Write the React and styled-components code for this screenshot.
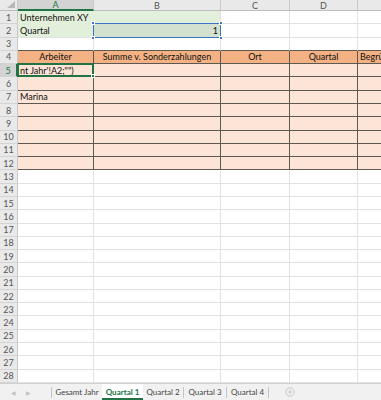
import styled, { createGlobalStyle } from "styled-components";

const GlobalStyle = createGlobalStyle`
  html, body { margin: 0; padding: 0; background: #ffffff; }
  body { font-family: Lato, "Open Sans", sans-serif; }
  * { box-sizing: border-box; }
`

const GREEN = "#e2efda"
const GREEN_SEL = "#d3e1d0"
const ORANGE = "#f4b183"
const PEACH = "#fce4d6"
const GRID = "#e2e2e2"
const DARK = "#5e5853"
const EXCEL_GREEN = "#217346"

const Window = styled.div`
  width: 381px;
  height: 400px;
  overflow: hidden;
  display: flex;
  flex-direction: column;
  background: #ffffff;
`

const Sheet = styled.div`
  display: grid;
  grid-template-columns: 18px 76px 127px 69px 68px 80px;
  grid-template-rows: 11px repeat(28, 13.2857px);
  height: 383px;
  overflow: hidden;
  font-size: 9px;
  color: #111111;
`

const Corner = styled.div`
  background: #e9e9e9;
  border-right: 1px solid #c9c9c9;
  border-bottom: 1px solid #bdbdbd;
  position: relative;
  &::after {
    content: "";
    position: absolute;
    right: 2px;
    bottom: 2px;
    border-left: 8px solid transparent;
    border-bottom: 7px solid #b8b8b8;
  }
`

const ColHead = styled.div`
  display: flex;
  align-items: center;
  justify-content: center;
  background: ${p => (p.$active ? "#d3d3d3" : "#e9e9e9")};
  color: ${p => (p.$active ? EXCEL_GREEN : "#555555")};
  border-right: 1px solid #c9c9c9;
  border-bottom: ${p => (p.$active ? `2px solid ${EXCEL_GREEN}` : "1px solid #bdbdbd")};
  font-size: 9px;
  line-height: 1;
`

const RowHead = styled.div`
  display: flex;
  align-items: center;
  justify-content: center;
  background: ${p => (p.$active ? "#d3d3d3" : "#e9e9e9")};
  color: ${p => (p.$active ? EXCEL_GREEN : "#555555")};
  border-right: ${p => (p.$active ? `2px solid ${EXCEL_GREEN}` : "1px solid #c9c9c9")};
  border-bottom: 1px solid #d4d4d4;
  font-size: 9px;
  line-height: 1;
`

const Cell = styled.div`
  grid-row: ${p => p.$row};
  grid-column: ${p => p.$col};
  display: flex;
  align-items: center;
  justify-content: ${p => p.$align || "flex-start"};
  padding: 0 2px;
  background: ${p => p.$fill || "#ffffff"};
  border-right: 1px solid ${p => p.$right};
  border-bottom: 1px solid ${p => p.$bottom};
  box-shadow: ${p => (p.$double ? "0 1px 0 #b9b2ad" : "none")};
  white-space: nowrap;
  overflow: hidden;
  line-height: 1;
`

const Selection = styled.div`
  grid-row: 3;
  grid-column: 3;
  margin: -1px 0 0 -1px;
  border: 1px solid #3b73c9;
  position: relative;
  z-index: 2;
  pointer-events: none;
`

const Active = styled.div`
  grid-row: 6;
  grid-column: 2;
  margin: -1px 0 0 -1px;
  border: 2px solid ${EXCEL_GREEN};
  position: relative;
  z-index: 2;
  pointer-events: none;
`

const Handle = styled.span`
  position: absolute;
  width: 4px;
  height: 4px;
  background: ${p => p.$color};
  border: 1px solid #ffffff;
  ${p => (p.$top ? "top: -3px;" : "bottom: -3px;")}
  ${p => (p.$left ? "left: -3px;" : "right: -3px;")}
`

const TabBar = styled.div`
  height: 17px;
  display: flex;
  align-items: stretch;
  background: #f1f1f1;
  border-top: 1px solid #d0d0d0;
  font-size: 8px;
  color: #444444;
`

const Nav = styled.div`
  width: 51px;
  display: flex;
  align-items: center;
  gap: 10px;
  padding-left: 11px;
  color: #c2c2c2;
  font-size: 6px;
`

const Sep = styled.div`
  width: 1px;
  align-self: center;
  height: 11px;
  background: #c4c4c4;
`

const Tab = styled.div`
  display: flex;
  align-items: center;
  justify-content: center;
  width: ${p => p.$w}px;
  background: ${p => (p.$active ? "#ffffff" : "transparent")};
  color: ${p => (p.$active ? EXCEL_GREEN : "#444444")};
  font-weight: ${p => (p.$active ? 700 : 400)};
  border-bottom: 2px solid ${p => (p.$active ? EXCEL_GREEN : "transparent")};
  padding-top: 1px;
`

const AddBtn = styled.div`
  margin-left: 16px;
  display: flex;
  align-items: center;
`

const cols = ["A", "B", "C", "D", "E"]

const texts = {
  "1A": { t: "Unternehmen XY" },
  "2A": { t: "Quartal" },
  "2B": { t: "1", a: "flex-end" },
  "4A": { t: "Arbeiter", a: "center" },
  "4B": { t: "Summe v. Sonderzahlungen", a: "center" },
  "4C": { t: "Ort", a: "center" },
  "4D": { t: "Quartal", a: "center" },
  "4E": { t: "Begründung", a: "flex-start" },
  "5A": { t: "nt Jahr'!A2;\"\")" },
  "7A": { t: "Marina" },
}

const fillFor = (r, c) => {
  if (r === 1 && (c === "A" || c === "B")) return GREEN
  if (r === 2 && c === "A") return GREEN
  if (r === 2 && c === "B") return GREEN_SEL
  if (r === 4) return ORANGE
  if (r >= 5 && r <= 12) return PEACH
  return null
}

const bordersFor = (r, c, fill) => {
  const inTable = r >= 4 && r <= 12
  let right = fill || GRID
  let bottom = fill || GRID
  if (r === 1 && c === "B") right = GRID
  if (r === 2) bottom = GRID
  if (r === 1 && c === "A") bottom = GREEN
  if (r === 1 && c === "B") bottom = GREEN_SEL
  if (inTable) right = DARK
  if (inTable || r === 3) bottom = DARK
  return { right, bottom }
}

const ExcelSheet = () => {
  const rows = Array.from({ length: 28 }, (_, i) => i + 1)
  return (
    <Sheet>
      <Corner />
      {cols.map(c => (
        <ColHead key={c} $active={c === "A"}>{c}</ColHead>
      ))}
      {rows.map(r => [
        <RowHead key={`h${r}`} style={{ gridRow: r + 1 }} $active={r === 5}>{r}</RowHead>,
        ...cols.map((c, ci) => {
          const fill = fillFor(r, c)
          const { right, bottom } = bordersFor(r, c, fill)
          const tx = texts[`${r}${c}`]
          return (
            <Cell
              key={`${r}${c}`}
              $row={r + 1}
              $col={ci + 2}
              $fill={fill}
              $right={right}
              $bottom={bottom}
              $double={r >= 5 && r <= 11}
              $align={tx && tx.a}
            >
              {tx ? tx.t : ""}
            </Cell>
          )
        }),
      ])}
      <Selection>
        <Handle $color="#3b73c9" $top $left />
        <Handle $color="#3b73c9" $left />
        <Handle $color="#3b73c9" $top />
        <Handle $color="#3b73c9" />
      </Selection>
      <Active>
        <Handle $color={EXCEL_GREEN} />
      </Active>
    </Sheet>
  )
}

export default function App() {
  return (
    <Window>
      <GlobalStyle />
      <ExcelSheet />
      <TabBar>
        <Nav>
          <span>◀</span>
          <span>▶</span>
        </Nav>
        <Sep />
        <Tab $w={50}>Gesamt Jahr</Tab>
        <Tab $w={41} $active>Quartal 1</Tab>
        <Tab $w={40}>Quartal 2</Tab>
        <Sep />
        <Tab $w={42}>Quartal 3</Tab>
        <Sep />
        <Tab $w={41}>Quartal 4</Tab>
        <Sep />
        <AddBtn>
          <svg width="10" height="10" viewBox="0 0 10 10">
            <circle cx="5" cy="5" r="4.2" fill="none" stroke="#c4c4c4" strokeWidth="0.9" />
            <path d="M5 2.8v4.4M2.8 5h4.4" stroke="#c4c4c4" strokeWidth="0.9" />
          </svg>
        </AddBtn>
      </TabBar>
    </Window>
  )
}
